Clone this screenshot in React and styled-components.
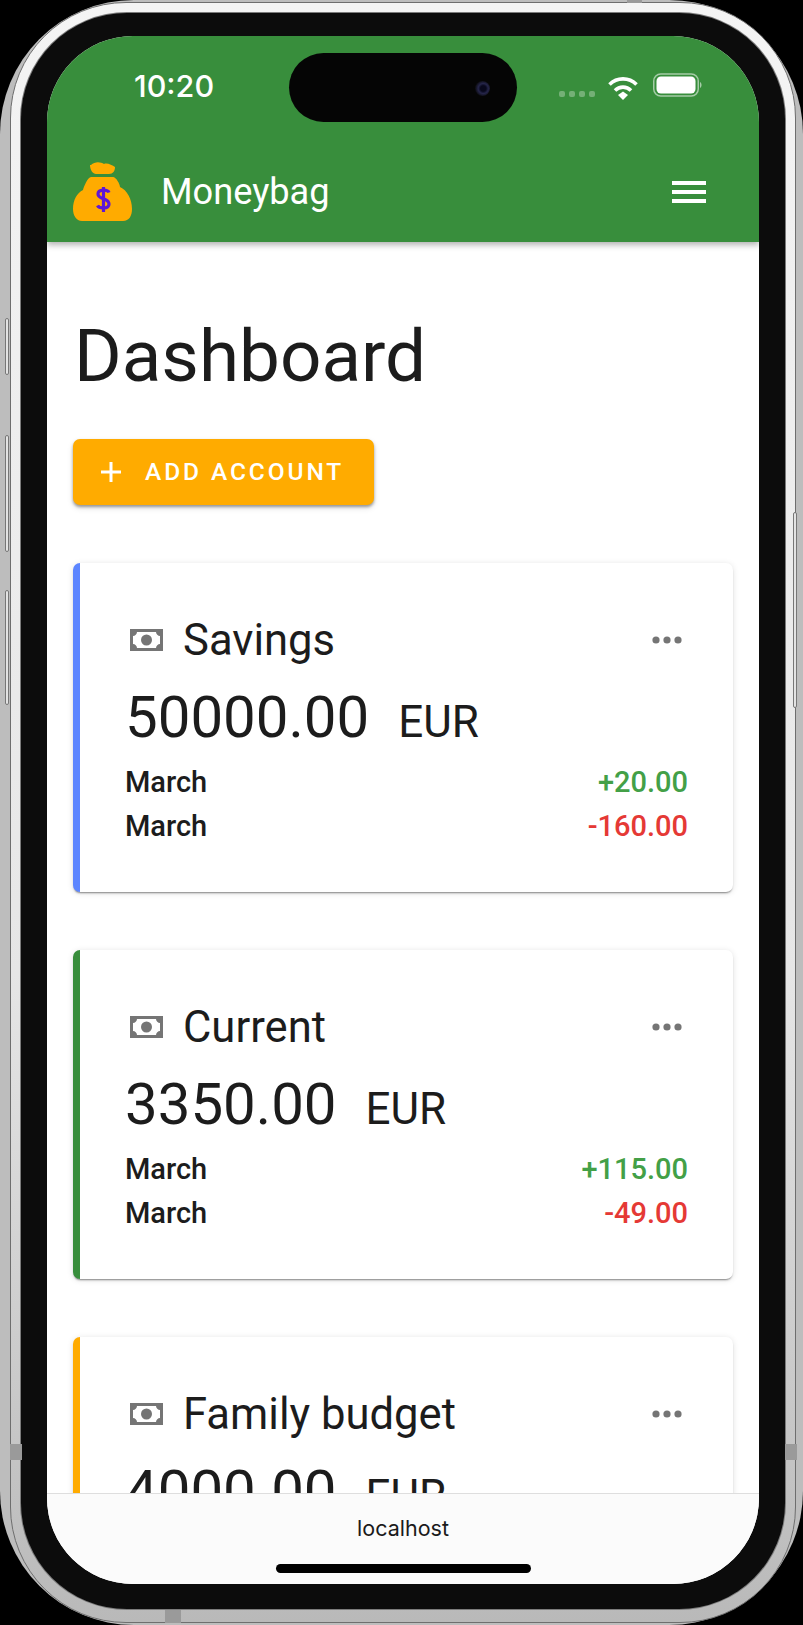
import React from "react";
import styled, { createGlobalStyle } from "styled-components";

const Global = createGlobalStyle`
  html, body { margin: 0; padding: 0; background: #000; }
  * { box-sizing: border-box; }
  body { font-family: Roboto, "Liberation Sans", sans-serif; color: #1c1c1c; }
`;

const Fringe = styled.div`
  position: relative;
  width: 803px;
  height: 1625px;
  padding: 2px 7px 2px 10px;
  background: #bdbdbd;
  border-radius: 134px;
`;
const Chrome = styled.div`
  height: 100%;
  padding: 10px 10px 13px 10px;
  border: 1px solid #6e6e6e;
  border-radius: 116px;
  background: linear-gradient(#f4f4f4, #e6e6e6 60%, #b9b9b9);
`;
const Bezel = styled.div`
  height: 100%;
  padding: 23px 26px 25px 26px;
  border-radius: 106px;
  background: #0c0c0c;
  box-shadow: 0 0 0 1px #7c7c7c;
`;
const Screen = styled.div`
  position: relative;
  display: flex;
  flex-direction: column;
  height: 100%;
  overflow: hidden;
  border-radius: 86px;
  background: #fff;
`;
const SideKey = styled.div`
  position: absolute;
  top: ${(p) => p.$top}px;
  ${(p) => (p.$right ? "right: 6px" : "left: 5px")};
  width: 4px;
  height: ${(p) => p.$h}px;
  border: 1px solid #777;
  border-radius: 2px;
  background: #e3e3e3;
`;
const Band = styled.div`
  position: absolute;
  top: ${(p) => p.$top}px;
  left: ${(p) => p.$left}px;
  width: ${(p) => p.$w}px;
  height: ${(p) => p.$h}px;
  background: #9a9a9a;
`;

const Header = styled.header`
  position: relative;
  z-index: 2;
  flex: none;
  height: 206px;
  background: #388e3c;
  box-shadow: 0 3px 6px rgba(0, 0, 0, 0.3);
  color: #fff;
`;
const StatusBar = styled.div`
  display: flex;
  align-items: center;
  height: 100px;
  padding: 0 56px 0 87px;
`;
const Time = styled.span`
  margin-top: -2px;
  font-family: Inter, Roboto, sans-serif;
  font-size: 30.5px;
  font-weight: 500;
`;
const StatusIcons = styled.div`
  display: flex;
  align-items: center;
  margin-left: auto;
`;
const Dots = styled.div`
  display: flex;
  gap: 4px;
  margin: 16px 12px 0 0;
`;
const Dot = styled.span`
  width: 6px;
  height: 6px;
  border-radius: 2px;
  background: rgba(255, 255, 255, 0.3);
`;
const WifiIcon = styled.svg`
  margin-top: 3px;
`;
const BatteryIcon = styled.svg`
  margin: -2px 0 0 14px;
`;
const Island = styled.div`
  position: absolute;
  top: 17px;
  left: 242px;
  display: flex;
  align-items: center;
  justify-content: flex-end;
  width: 228px;
  height: 69px;
  padding-right: 27px;
  border-radius: 35px;
  background: #050505;
`;
const Lens = styled.span`
  width: 15px;
  height: 15px;
  margin-top: 2px;
  border-radius: 50%;
  background: radial-gradient(circle at 55% 50%, #08081c 25%, #25254a 45%, #0e0e16 70%, #050505);
`;
const Toolbar = styled.div`
  display: flex;
  align-items: center;
  height: 106px;
  padding: 6px 53px 0 26px;
`;
const Brand = styled.span`
  margin: -2px 0 0 28px;
  font-size: 36.2px;
  font-weight: 400;
`;
const Burger = styled.div`
  display: flex;
  flex-direction: column;
  gap: 5px;
  margin-left: auto;
`;
const BurgerBar = styled.span`
  width: 34px;
  height: 4px;
  background: #fff;
`;

const Main = styled.main`
  flex: 1;
  min-height: 0;
  overflow: hidden;
  padding: 0 26px;
`;
const Title = styled.h1`
  margin: 64px 0 0 1px;
  font-size: 72.8px;
  line-height: 100px;
  font-weight: 400;
  color: #1c1c1c;
`;
const AddButton = styled.button`
  display: flex;
  align-items: center;
  width: 301px;
  height: 66px;
  margin-top: 33px;
  padding: 0 0 0 28px;
  border: none;
  border-radius: 7px;
  background: #ffab00;
  box-shadow: 0 2px 3px rgba(0, 0, 0, 0.35), 0 3px 6px rgba(0, 0, 0, 0.12);
  color: #fff;
  font-family: inherit;
  font-size: 24.5px;
  font-weight: 500;
  letter-spacing: 2.9px;
`;
const AddLabel = styled.span`
  margin: -2px 0 0 24px;
`;
const Cards = styled.div`
  display: flex;
  flex-direction: column;
  gap: 58px;
  margin-top: 58px;
`;
const Card = styled.section`
  flex: none;
  height: 329px;
  padding: 49px 45px 0 45px;
  border-left: 7px solid ${(p) => p.$accent};
  border-radius: 7px;
  background: #fff;
  box-shadow: 0 2px 2px -1px rgba(0, 0, 0, 0.45), 0 1px 6px rgba(0, 0, 0, 0.12);
`;
const CardHead = styled.div`
  display: flex;
  align-items: center;
  height: 56px;
  padding-left: 5px;
`;
const BillIcon = styled.svg`
  flex: none;
`;
const CardName = styled.h2`
  margin: 0 0 0 20px;
  font-size: 43.6px;
  font-weight: 400;
  color: #1c1c1c;
`;
const More = styled.svg`
  margin: 0 6px 0 auto;
`;
const Balance = styled.div`
  display: flex;
  align-items: baseline;
  height: 80px;
  margin-top: 9px;
  line-height: 80px;
  color: #1c1c1c;
`;
const Amount = styled.span`
  font-size: 58.2px;
`;
const Currency = styled.span`
  margin-left: 29px;
  font-size: 44px;
`;
const Rows = styled.div`
  margin-top: 3px;
`;
const Row = styled.div`
  display: flex;
  justify-content: space-between;
  height: 44px;
  line-height: 44px;
  font-size: 29px;
  font-weight: 500;
`;
const Delta = styled.span`
  color: ${(p) => (p.$up ? "#43a047" : "#e53935")};
`;

const Footer = styled.footer`
  display: flex;
  flex-direction: column;
  align-items: center;
  flex: none;
  height: 91px;
  border-top: 1px solid #dedede;
  background: #fbfbfb;
`;
const Url = styled.div`
  margin-top: 20px;
  font-family: Inter, Roboto, sans-serif;
  font-size: 21.5px;
  line-height: 28px;
  color: #1a1a1a;
`;
const HomeBar = styled.div`
  width: 255px;
  height: 9px;
  margin-top: 22px;
  border-radius: 5px;
  background: #000;
`;

const Wifi = () => (
  <WifiIcon width="32" height="25" viewBox="0 0 32 25" fill="none" stroke="#fff" strokeWidth="3.6">
    <path d="M2.5 9.5 C10 2 22 2 29.5 9.5" />
    <path d="M8 15.5 C12.5 11 19.5 11 24 15.5" />
    <path d="M11 20 L16 16.5 L21 20 L16 25 Z" fill="#fff" stroke="none" />
  </WifiIcon>
);
const Battery = () => (
  <BatteryIcon width="50" height="25" viewBox="0 0 50 25">
    <rect x="0.75" y="1" width="44.5" height="22" rx="7" fill="none" stroke="#fff" strokeOpacity="0.55" strokeWidth="1.5" />
    <rect x="3.5" y="3.5" width="39" height="17" rx="4.5" fill="#fff" />
    <path d="M47 9 C49 10 49 14 47 15 Z" fill="#fff" fillOpacity="0.55" />
  </BatteryIcon>
);
const Bag = () => (
  <svg width="60" height="60" viewBox="0 0 60 60">
    <path fill="#ffab00" d="M18 3 C22 -1 28 0 31 2 C34 0.5 39 3 42 5 C42 9 40 12 36 12 L23 12 C20 12 17 8 17 3Z" />
    <path fill="#ffab00" d="M18 15 L40 15 C43 15 47 22 47 25 C54 28 59 37 59 47 C59 54 56 59 50 59 L9 59 C3 59 0 53 0 47 C0 38 4 31 10 28 C11 24 15 15 18 15Z" />
    <path fill="none" stroke="#5e17d6" strokeWidth="3.2" d="M36 30.5 C35 27.5 25 26.5 25 32 C25 38 36 35.5 36 42 C36 47.5 26 46.5 24.5 43.5" />
    <path stroke="#5e17d6" strokeWidth="3.2" d="M30.5 25 V50" />
  </svg>
);
const Bill = () => (
  <BillIcon width="33" height="22" viewBox="0 0 33 22">
    <rect width="33" height="22" fill="#757575" />
    <path fill="#fff" d="M7 3 H26 C26 5 28 7 30 7 V15 C28 15 26 17 26 19 H7 C7 17 5 15 3 15 V7 C5 7 7 5 7 3Z" />
    <circle cx="16.5" cy="11" r="5.5" fill="#757575" />
  </BillIcon>
);
const Plus = () => (
  <svg width="20" height="20" viewBox="0 0 20 20" fill="#fff">
    <rect x="8.5" width="3" height="20" />
    <rect y="8.5" width="20" height="3" />
  </svg>
);

const accounts = [
  { name: "Savings", amount: "50000.00", accent: "#5c85ff", up: "+20.00", down: "-160.00" },
  { name: "Current", amount: "3350.00", accent: "#388e3c", up: "+115.00", down: "-49.00" },
  { name: "Family budget", amount: "4000.00", accent: "#ffab00", up: "+0.00", down: "-0.00" },
];

export default function App() {
  return (
    <>
      <Global />
      <Fringe>
        <SideKey $top={318} $h={57} />
        <SideKey $top={435} $h={117} />
        <SideKey $top={590} $h={115} />
        <SideKey $right $top={512} $h={196} />
        <Band $top={1444} $left={10} $w={12} $h={16} />
        <Band $top={1444} $left={785} $w={12} $h={16} />
        <Band $top={1610} $left={165} $w={16} $h={13} />
        <Band $top={0} $left={627} $w={15} $h={3} />
        <Chrome>
          <Bezel>
            <Screen>
              <Header>
                <Island><Lens /></Island>
                <StatusBar>
                  <Time>10:20</Time>
                  <StatusIcons>
                    <Dots><Dot /><Dot /><Dot /><Dot /></Dots>
                    <Wifi />
                    <Battery />
                  </StatusIcons>
                </StatusBar>
                <Toolbar>
                  <Bag />
                  <Brand>Moneybag</Brand>
                  <Burger><BurgerBar /><BurgerBar /><BurgerBar /></Burger>
                </Toolbar>
              </Header>
              <Main>
                <Title>Dashboard</Title>
                <AddButton><Plus /><AddLabel>ADD ACCOUNT</AddLabel></AddButton>
                <Cards>
                  {accounts.map((a) => (
                    <Card key={a.name} $accent={a.accent}>
                      <CardHead>
                        <Bill />
                        <CardName>{a.name}</CardName>
                        <More width="30" height="8" viewBox="0 0 30 8" fill="#757575">
                          <circle cx="4" cy="4" r="3.6" />
                          <circle cx="15" cy="4" r="3.6" />
                          <circle cx="26" cy="4" r="3.6" />
                        </More>
                      </CardHead>
                      <Balance>
                        <Amount>{a.amount}</Amount>
                        <Currency>EUR</Currency>
                      </Balance>
                      <Rows>
                        <Row><span>March</span><Delta $up>{a.up}</Delta></Row>
                        <Row><span>March</span><Delta>{a.down}</Delta></Row>
                      </Rows>
                    </Card>
                  ))}
                </Cards>
              </Main>
              <Footer>
                <Url>localhost</Url>
                <HomeBar />
              </Footer>
            </Screen>
          </Bezel>
        </Chrome>
      </Fringe>
    </>
  );
}
